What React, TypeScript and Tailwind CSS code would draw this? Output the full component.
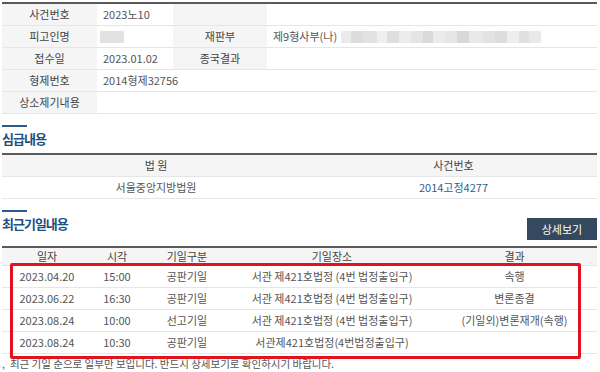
const font = { fontFamily: '"Noto Sans CJK KR", "Noto Sans", sans-serif' };

function Blur({ w, c }: { w: number; c: string }) {
  return <span className="inline-block h-[12px]" style={{ width: w, backgroundColor: c }} />;
}

const blurBlocks: [number, string][] = [
  [10, "#ebebeb"], [12, "#dcdcdc"], [14, "#e2e2e2"], [10, "#efefef"], [12, "#dedede"],
  [12, "#ececec"], [12, "#e4e4e4"], [10, "#dadada"], [12, "#ebebeb"], [12, "#e6e6e6"],
  [12, "#d8d8d8"], [14, "#e9e9e9"], [12, "#e3e3e3"], [12, "#dddddd"], [12, "#eeeeee"],
  [10, "#e0e0e0"], [12, "#e9e9e9"],
];

const hearings = [
  { date: "2023.04.20", time: "15:00", kind: "공판기일", place: "서관 제421호법정 (4번 법정출입구)", result: "속행" },
  { date: "2023.06.22", time: "16:30", kind: "공판기일", place: "서관 제421호법정 (4번 법정출입구)", result: "변론종결" },
  { date: "2023.08.24", time: "10:00", kind: "선고기일", place: "서관 제421호법정 (4번 법정출입구)", result: "(기일외)변론재개(속행)" },
  { date: "2023.08.24", time: "10:30", kind: "공판기일", place: "서관제421호법정(4번법정출입구)", result: "" },
];

function SectionTitle({ children }: { children: string }) {
  return (
    <div>
      <div className="w-[25px] h-[2px] bg-[#2a5a8a]" />
      <div className="mt-[4px] text-[13px] font-bold leading-[16px] tracking-[-1px] text-[#1f4f80]">{children}</div>
    </div>
  );
}

export default function App() {
  const cell = "flex items-center h-[22px] border-b border-[#e6e6e6]";
  const label = "justify-center bg-[#f5f5f5] text-[#444]";
  return (
    <div className="w-[600px] h-[372px] overflow-hidden bg-white text-[11px] text-[#555] relative" style={font}>
      <div className="pl-[2px] pr-[3px] pt-[2px]">
        {/* 사건 기본정보 */}
        <div className="border-t-2 border-[#5a5a5a] grid grid-cols-[95px_76px_94px_1fr]">
          <div className={`${cell} ${label}`}>사건번호</div>
          <div className={`${cell} px-[6px]`}>2023노10</div>
          <div className={`${cell} bg-[#f5f5f5]`} />
          <div className={cell} />

          <div className={`${cell} ${label}`}>피고인명</div>
          <div className={`${cell} px-[3px]`}><Blur w={24} c="#e2e2e2" /></div>
          <div className={`${cell} ${label}`}>재판부</div>
          <div className={`${cell} px-[6px]`}>
            <span>제9형사부(나)</span>
            <span className="ml-[4px] flex">
              {blurBlocks.map(([w, c], i) => <Blur key={i} w={w} c={c} />)}
            </span>
          </div>

          <div className={`${cell} ${label}`}>접수일</div>
          <div className={`${cell} px-[6px]`}>2023.01.02</div>
          <div className={`${cell} ${label}`}>종국결과</div>
          <div className={cell} />

          <div className={`${cell} ${label}`}>형제번호</div>
          <div className={`${cell} px-[6px] col-span-3`}>2014형제32756</div>

          <div className={`${cell} ${label}`}>상소제기내용</div>
          <div className={`${cell} col-span-3`} />
        </div>

        {/* 심급내용 */}
        <div className="mt-[11px]">
          <SectionTitle>심급내용</SectionTitle>
        </div>
        <div className="mt-[6px] border-t-2 border-[#5a5a5a] grid grid-cols-[308px_1fr]">
          <div className={`${cell} justify-center bg-[#f5f5f5] text-[#444]`}>법 원</div>
          <div className={`${cell} justify-center bg-[#f5f5f5] text-[#444]`}>사건번호</div>
          <div className={`${cell} justify-center`}>서울중앙지방법원</div>
          <div className={`${cell} justify-center text-[#2f5e8f]`}>2014고정4277</div>
        </div>

        {/* 최근기일내용 */}
        <div className="mt-[11px] flex items-start justify-between">
          <SectionTitle>최근기일내용</SectionTitle>
          <button className="mt-[8px] w-[70px] h-[22px] bg-[#34495e] text-white text-[11px] flex items-center justify-center">
            상세보기
          </button>
        </div>
        <div className="mt-[6px] border-t-2 border-[#5a5a5a] grid grid-cols-[90px_50px_90px_200px_1fr]">
          {["일자", "시각", "기일구분", "기일장소", "결과"].map((h) => (
            <div key={h} className="flex items-center justify-center h-[18px] bg-[#f5f5f5] text-[#444] border-b border-[#e6e6e6]">
              {h}
            </div>
          ))}
          {hearings.map((r, i) => (
            <div key={i} className="contents">
              <div className={`${cell} justify-center`}>{r.date}</div>
              <div className={`${cell} justify-center`}>{r.time}</div>
              <div className={`${cell} justify-center`}>{r.kind}</div>
              <div className={`${cell} justify-center`}>{r.place}</div>
              <div className={`${cell} justify-center`}>{r.result}</div>
            </div>
          ))}
        </div>
        <div className="mt-[2px] flex items-center gap-[5px] text-[10.5px] text-[#555]">
          <span className="leading-none">,</span>
          <span>최근 기일 순으로 일부만 보입니다. 반드시 상세보기로 확인하시기 바랍니다.</span>
        </div>
      </div>

      {/* 강조 표시 */}
      <div className="absolute left-[10px] top-[263px] w-[571px] h-[96px] border-[3px] border-[#e0141e] rounded-[2px] pointer-events-none" />
    </div>
  );
}
